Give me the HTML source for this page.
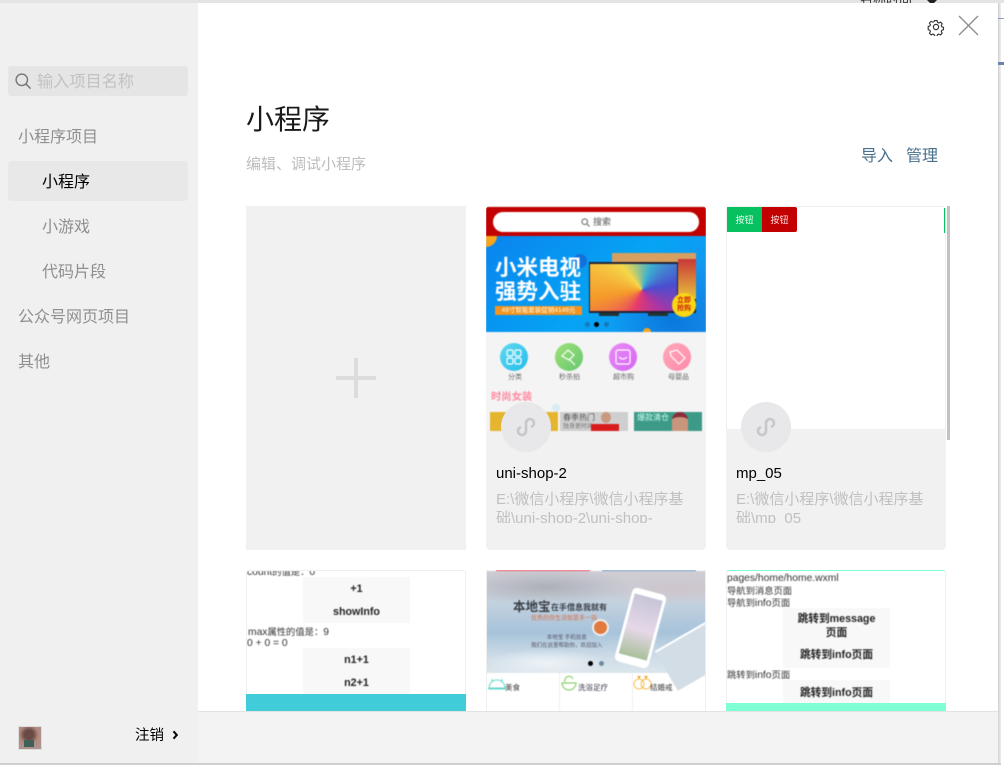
<!DOCTYPE html>
<html lang="zh"><head><meta charset="utf-8"><title>小程序</title>
<style>
html,body{margin:0;padding:0;width:1004px;height:765px;overflow:hidden;background:#fff;font-family:"Liberation Sans","Noto Sans CJK SC",sans-serif}
div,span,svg{position:absolute;white-space:nowrap}
i{font-style:normal;font-size:9.3px}
.s{font-size:16px;line-height:24px;color:#8f8f8f}
.name{font-size:15px;line-height:20px;color:#000}
.path{font-size:15px;line-height:19px;color:#c0c0c0;width:195px;overflow:hidden;height:33px;white-space:normal;word-break:break-all}
.c{overflow:hidden}
.bl{left:0;top:0;width:220px;overflow:hidden;filter:blur(.45px)}
.b{font-weight:bold;background:#f8f8f8;text-align:center;color:#222;font-size:10.7px}
.t{font-size:10.3px;line-height:12px;color:#333;left:0}
</style></head><body>
<!-- behind window -->
<div style="left:0;top:0;width:1004px;height:765px;background:#fff"></div>
<div style="left:0;top:0;width:1004px;height:3px;background:#e4e4e4"></div>
<div style="left:860px;top:-7px;font-size:13px;line-height:14px;color:#333">名称时间</div>
<svg style="left:926px;top:0" width="12" height="3" viewBox="0 0 12 3"><path d="M1 0H11L8 3H4z" fill="#222"/></svg>
<!-- window shadow -->
<div style="left:998px;top:3px;width:3px;height:762px;background:linear-gradient(90deg,#cfcfcf,#f0f0f0)"></div>
<div style="left:0;top:763px;width:1001px;height:2px;background:#cfcfcf"></div>
<div style="left:998px;top:18px;width:6px;height:1px;background:#8a9cc0"></div>
<div style="left:998px;top:62px;width:6px;height:3px;background:#6d82ad"></div>
<!-- sidebar -->
<div style="left:0;top:3px;width:198px;height:760px;background:#f0f0f0"></div>
<div style="left:8px;top:66px;width:180px;height:30px;background:#e5e5e5;border-radius:3px"></div>
<svg style="left:15px;top:73px" width="17" height="17" viewBox="0 0 17 17"><circle cx="6.800" cy="6.800" r="5.700" fill="none" stroke="#777" stroke-width="1.400"/><path d="M10.800 10.800L15.600 15.600" stroke="#777" stroke-width="1.500"/></svg>
<div style="left:37px;top:70px;font-size:16.200px;line-height:24px;color:#c2c2c2">输入项目名称</div>
<div class="s" style="left:18px;top:126px">小程序项目</div>
<div style="left:8px;top:161px;width:180px;height:40px;background:#e8e8e8;border-radius:4px"></div>
<div class="s" style="left:42px;top:171px;color:#000">小程序</div>
<div class="s" style="left:42px;top:216px">小游戏</div>
<div class="s" style="left:42px;top:261px">代码片段</div>
<div class="s" style="left:18px;top:306px">公众号网页项目</div>
<div class="s" style="left:18px;top:351px">其他</div>
<div style="left:18px;top:726px;width:22px;height:22px;background:radial-gradient(circle at 45% 35%,#6a4a44 0 25%,#b08a80 50%,#a99 100%);border:1px solid #ddd"></div>
<div style="left:24px;top:740px;width:10px;height:7px;background:#3f5f58"></div>
<div style="left:135px;top:726px;font-size:14.500px;line-height:20px;color:#000">注销</div>
<svg style="left:172px;top:730px" width="7" height="10" viewBox="0 0 7 10"><path d="M1.500 1.300L4.800 5L1.500 8.700" fill="none" stroke="#000" stroke-width="2"/></svg>
<!-- main header -->
<div style="left:198px;top:3px;width:800px;height:708px;background:#fff"></div>
<svg style="left:927px;top:18px" width="18" height="18" viewBox="0 0 18 18"><path d="M7.500 1.500h3l.5 2.200 1.500.7 2-1.100 2 2.100-1.100 1.900.6 1.500 2 .6v2.900l-2 .6-.6 1.500 1.100 1.900-2 2.100-2-1.100-1.500.7-.5 2h-3l-.5-2-1.500-.7-2 1.100-2-2.100 1.100-1.900-.6-1.500-2-.6V8.400l2-.6.6-1.500L1.400 4.400l2-2.100 2 1.100 1.500-.7z" transform="translate(1.200 1.300) scale(.85)" fill="none" stroke="#333" stroke-width="1.300"/><circle cx="9" cy="9" r="2.600" fill="none" stroke="#333" stroke-width="1.200"/></svg>
<svg style="left:958px;top:15px" width="21" height="21" viewBox="0 0 21 21"><path d="M1 1L20 20M20 1L1 20" stroke="#8c8c8c" stroke-width="1.300"/></svg>
<div style="left:246px;top:101px;font-size:28px;line-height:38px;color:#1a1a1a">小程序</div>
<div style="left:246px;top:154px;font-size:15px;line-height:22px;color:#bdbdbd">编辑、调试小程序</div>
<div style="left:861px;top:146px;font-size:16px;line-height:22px;color:#48708c">导入</div>
<div style="left:906px;top:146px;font-size:16px;line-height:22px;color:#48708c">管理</div>
<!-- add card -->
<div style="left:246px;top:206px;width:220px;height:344px;background:#f1f1f1"></div>
<div style="left:336px;top:376px;width:40px;height:4px;background:#dcdcdc"></div>
<div style="left:354px;top:358px;width:4px;height:40px;background:#dcdcdc"></div>
<!-- card 2 -->
<div class="c" style="left:486px;top:206px;width:220px;height:344px;background:#f1f1f1;border-radius:4px">
 <div class="bl" style="height:225px;background:#f4f4f4">
 <div style="left:0;top:1px;width:220px;height:29px;background:#c30000"></div>
 <div style="left:7px;top:6px;width:206px;height:20px;background:#fff;border-radius:10px"></div>
 <svg style="left:95px;top:12px" width="9" height="9" viewBox="0 0 9 9"><circle cx="3.700" cy="3.700" r="2.800" fill="none" stroke="#666"/><path d="M6 6L8.500 8.500" stroke="#666"/></svg>
 <div style="left:107px;top:10px;font-size:9px;line-height:13px;color:#555">搜索</div>
 <div style="left:0;top:30px;width:220px;height:96px;background:radial-gradient(circle at 85% 85%,#0a78dc 0,transparent 30%),linear-gradient(135deg,#0a84ee,#06a4f4 55%,#1c8ff0)"></div>
 <div style="left:0;top:30px;width:11px;height:11px;background:#f7a51d;border-radius:0 0 11px 0"></div>
 <div style="left:87px;top:48px;width:14px;height:14px;border-radius:50%;background:#1272dc"></div>
 <div style="left:9px;top:50px;font-size:21.500px;line-height:24px;font-weight:bold;color:#fff;letter-spacing:0">小米电视<br>强势入驻</div>
 <div style="left:9px;top:100px;width:87px;height:9px;background:#f2941f;font-size:6.500px;line-height:9px;color:#ffe;text-align:center">49寸智能套装促销4149元</div>
 <div style="left:126px;top:47px;width:84px;height:60px;background:linear-gradient(90deg,#222,#444 60%,#222);border-top:9px solid #d8a060;box-sizing:border-box"></div>
 <div style="left:192px;top:53px;width:18px;height:40px;background:linear-gradient(#c83838,#e8c33d)"></div>
 <div style="left:103px;top:56px;width:89px;height:51px;border:1px solid #223;border-width:2px 1px 2px 1px;box-sizing:border-box;background:conic-gradient(from 200deg at 60% 55%,#e73a6b,#f59a2b,#f5d84a,#3bb0d0,#4a4ed0,#b035a0,#e73a6b)"></div>
 <div style="left:113px;top:107px;width:20px;height:3px;background:#233"></div>
 <div style="left:162px;top:107px;width:20px;height:3px;background:#233"></div>
 <div style="left:186px;top:87px;width:24px;height:24px;background:#f9d714;border-radius:50%;font-size:7px;line-height:8px;text-align:center;color:#c21;white-space:normal;padding:4px 4px 0;box-sizing:border-box;font-weight:bold">立即抢购</div>
 <div style="left:99px;top:116px;width:5px;height:5px;border-radius:50%;background:#1579b8"></div>
 <div style="left:108px;top:116px;width:5px;height:5px;border-radius:50%;background:#000"></div>
 <div style="left:118px;top:116px;width:5px;height:5px;border-radius:50%;background:#1579b8"></div>
 <div style="left:157px;top:122px;width:8px;height:4px;background:#f7a51d;border-radius:4px 4px 0 0"></div>
 <div style="left:14px;top:137px;width:28px;height:28px;border-radius:50%;background:linear-gradient(135deg,#5fd8f2,#25bde8)"></div>
 <div style="left:69px;top:137px;width:28px;height:28px;border-radius:50%;background:linear-gradient(135deg,#9fe07a,#66c86e)"></div>
 <div style="left:123px;top:137px;width:28px;height:28px;border-radius:50%;background:linear-gradient(135deg,#ea8cf5,#d465f5)"></div>
 <div style="left:177px;top:137px;width:28px;height:28px;border-radius:50%;background:linear-gradient(135deg,#ffa9b9,#ff8aa8)"></div>
 <svg style="left:14px;top:137px" width="192" height="28" viewBox="0 0 192 28" fill="none" stroke="#fff" stroke-width="1.200"><rect x="7" y="7" width="6" height="6" rx="1.500"/><rect x="15" y="7" width="6" height="6" rx="1.500"/><rect x="7" y="15" width="6" height="6" rx="1.500"/><rect x="15" y="15" width="6" height="6" rx="1.500"/><path d="M62 13l6-6 6 5-5 5zM69 16l6 6"/><rect x="116" y="7" width="14" height="14" rx="2"/><path d="M119 14q4 4 8 0"/><path d="M170 9l7-2 8 8-6 6-8-8z"/></svg>
 <div style="left:22px;top:167px;font-size:7px;line-height:10px;color:#666">分类</div>
 <div style="left:73px;top:167px;font-size:7px;line-height:10px;color:#666">秒杀拍</div>
 <div style="left:127px;top:167px;font-size:7px;line-height:10px;color:#666">超市购</div>
 <div style="left:182px;top:167px;font-size:7px;line-height:10px;color:#666">母婴品</div>
 <div style="left:5px;top:185px;font-size:10.300px;line-height:14px;font-weight:bold;color:#ff8aa0">时尚女装</div>
 <div style="left:66px;top:198px;width:8px;height:8px;border-radius:50%;background:#d8ecf5"></div>
 <div style="left:4px;top:206px;width:68px;height:19px;background:#e5b52f"></div>
 <div style="left:74px;top:206px;width:68px;height:19px;background:#cfcfcf"></div>
 <div style="left:77px;top:207px;font-size:8px;line-height:10px;color:#555">春季热门</div>
 <div style="left:77px;top:217px;font-size:6px;line-height:8px;color:#777">独身更时尚</div>
 <div style="left:115px;top:206px;width:10px;height:11px;border-radius:50%;background:#c99a80"></div>
 <div style="left:105px;top:218px;width:28px;height:7px;background:#d81c1c"></div>
 <div style="left:148px;top:206px;width:68px;height:19px;background:#3d9a88"></div>
 <div style="left:151px;top:207px;font-size:8px;line-height:10px;color:#cfe">爆款清仓</div>
 <div style="left:186px;top:206px;width:16px;height:19px;background:#c9957c;border-top:5px solid #8d2c3a;box-sizing:border-box;border-radius:8px 8px 0 0"></div>
 </div>
 <div style="left:15px;top:196px;width:50px;height:50px;border-radius:50%;background:#e8e8ea"></div>
 <svg style="left:29px;top:210px" width="22" height="22" viewBox="0 0 22 22"><path d="M5 11.500A4 4 0 1 0 11 15V7A4 4 0 1 1 17 10.500" fill="none" stroke="#c8c8c8" stroke-width="2.600" stroke-linecap="round"/></svg>
 <div class="name" style="left:10px;top:258px">uni-shop-2</div>
 <div class="path" style="left:10px;top:284px">E:\微信小程序\微信小程序基础\uni-shop-2\uni-shop-</div>
</div>
<!-- card 3 -->
<div class="c" style="left:726px;top:206px;width:220px;height:344px;background:#f1f1f1;border-radius:4px">
 <div class="bl" style="height:224px;background:#fff;filter:none;border:1px solid #efefef;box-sizing:border-box"></div>
 <div style="left:1px;top:1px;width:35px;height:25px;background:#07c160;font-size:9px;line-height:27px;text-align:center;color:#e8fff0">按钮</div>
 <div style="left:36px;top:1px;width:35px;height:25px;background:#c30000;border-radius:0 2px 2px 0;font-size:9px;line-height:27px;text-align:center;color:#ffe0e0">按钮</div>
 <div style="left:218px;top:2px;width:1px;height:25px;background:#07c160"></div>
 <div style="left:15px;top:196px;width:50px;height:50px;border-radius:50%;background:#e8e8ea"></div>
 <svg style="left:29px;top:210px" width="22" height="22" viewBox="0 0 22 22"><path d="M5 11.500A4 4 0 1 0 11 15V7A4 4 0 1 1 17 10.500" fill="none" stroke="#c8c8c8" stroke-width="2.600" stroke-linecap="round"/></svg>
 <div class="name" style="left:10px;top:258px">mp_05</div>
 <div class="path" style="left:10px;top:284px">E:\微信小程序\微信小程序基础\mp_05</div>
</div>
<div style="left:947px;top:206px;width:3px;height:234px;background:#c2c2c2"></div>
<!-- row 2 -->
<div class="c" style="left:246px;top:570px;width:220px;height:141px;background:#fff;border:1px solid #efefef;border-width:1px 1px 0;box-sizing:border-box;border-radius:3px 3px 0 0">
 <div class="bl" style="height:140px;left:-1px;top:0">
 <div class="t" style="left:1px;top:-5px">count<i>的值是：</i>0</div>
 <div class="b" style="left:57px;top:6px;width:107px;height:46px;line-height:23px;padding-top:1px;box-sizing:border-box">+1<br>showInfo</div>
 <div class="t" style="left:2px;top:55px">max<i>属性的值是：</i>9</div>
 <div class="t" style="left:1px;top:67px">0 + 0 = 0</div>
 <div class="b" style="left:57px;top:77px;width:107px;height:46px;line-height:23px;padding-top:1px;box-sizing:border-box">n1+1<br>n2+1</div>
 </div>
</div>
<div style="left:246px;top:694px;width:220px;height:17px;background:#40ccd8"></div>
<div class="c" style="left:486px;top:570px;width:220px;height:141px;background:#fff;border:1px solid #eee;border-width:0 1px;box-sizing:border-box">
 <div class="bl" style="left:-1px;height:141px">
 <div style="left:10px;top:0;width:94px;height:1px;background:#f0506a"></div>
 <div style="left:116px;top:0;width:94px;height:1px;background:#6d9fd0"></div>
 <div style="left:0;top:1px;width:220px;height:102px;background:radial-gradient(ellipse 60px 14px at 60px 92px,#eef3f7,transparent),radial-gradient(ellipse 90px 16px at 190px 18px,#cfc5cb,transparent),radial-gradient(ellipse 90px 18px at 60px 16px,#aeb0b8,transparent),linear-gradient(180deg,#d0ccd2 0,#c4d2df 30%,#a7c3da 60%,#cfdde8 85%,#dce6ec 100%)"></div>
 <div style="left:27px;top:27px;font-size:12.500px;line-height:20px;font-weight:bold;color:#3b3f46">本地宝</div>
 <div style="left:65px;top:32px;font-size:8px;line-height:12px;font-weight:bold;color:#3b3f46">在手借息我就有</div>
 <div style="left:45px;top:44px;font-size:6px;line-height:10px;color:#d87048">优秀的你生活就是手一指</div>
 <div style="left:45px;top:64px;font-size:5.500px;line-height:8px;color:#556;text-align:center">本地宝 手机信息<br>我们在这里帮助你，欢迎加入</div>
 <div style="left:106px;top:49px;width:13px;height:13px;border-radius:50%;background:#e07a3e;border:2px solid #eee"></div>
 <div style="left:137px;top:20px;width:29px;height:62px;background:linear-gradient(#c7c5d8,#e6d8e8 55%,#a8c09a);border:3px solid #fff;border-width:6px 3px 8px;border-radius:5px;transform:rotate(15deg)"></div>
 <div style="left:176px;top:62px;width:64px;height:44px;background:#d3dde5;border-top:2px solid #fff;transform:rotate(-30deg)"></div>
 <div style="left:102px;top:91px;width:5px;height:5px;background:#000;border-radius:50%"></div>
 <div style="left:113px;top:91px;width:5px;height:5px;background:#6e8ba0;border-radius:50%"></div>
 <div style="left:73px;top:103px;width:1px;height:38px;background:#efefef"></div>
 <div style="left:146px;top:103px;width:1px;height:38px;background:#efefef"></div>
 <svg style="left:0;top:104px" width="218" height="20" viewBox="0 0 218 20" fill="none"><path d="M3 14a8 8 0 0 1 16 0zM2 15h18M6 5v3M16 5v3" stroke="#62d8c8" stroke-width="1"/><path d="M76 9h14a7 7 0 0 1-14 0zM79 8a4 4 0 0 1 8-3" stroke="#8ed070" stroke-width="1.200"/><circle cx="153" cy="10" r="5" stroke="#f5c050"/><circle cx="160" cy="10" r="5" stroke="#f5c050"/><path d="M151 2h4l-2 3zM158 2h4l-2 3z" fill="#f0a020"/></svg>
 <div style="left:19px;top:112px;font-size:7.500px;line-height:11px;color:#333">美食</div>
 <div style="left:92px;top:112px;font-size:7.500px;line-height:11px;color:#334">洗浴足疗</div>
 <div style="left:164px;top:112px;font-size:7.500px;line-height:11px;color:#333">结婚戒</div>
 </div>
</div>
<div class="c" style="left:726px;top:570px;width:220px;height:141px;background:#fff;border:1px solid #efefef;border-top:1px solid #7fffd4;box-sizing:border-box;border-radius:3px 3px 0 0">
 <div class="bl" style="left:-1px;height:140px">
 <div class="t" style="left:1px;top:2px">pages/home/home.wxml</div>
 <div class="t" style="left:1px;top:14px"><i>导航到消息页面</i></div>
 <div class="t" style="left:1px;top:26px"><i>导航到</i>info<i>页面</i></div>
 <div class="b" style="left:57px;top:37px;width:107px;height:60px;line-height:14px;padding-top:4px;box-sizing:border-box;white-space:normal">跳转到message<br>页面<div style="left:0;top:40px;width:107px;line-height:14px">跳转到info页面</div></div>
 <div class="t" style="left:1px;top:98px"><i>跳转到</i>info<i>页面</i></div>
 <div class="b" style="left:57px;top:109px;width:107px;height:23px;line-height:26px">跳转到info页面</div>
 </div>
</div>
<div style="left:726px;top:703px;width:220px;height:8px;background:#7fffd4"></div>
<!-- footer -->
<div style="left:198px;top:711px;width:800px;height:52px;background:#f3f3f3;border-top:1px solid #e2e2e2;box-sizing:border-box"></div>
</body></html>
